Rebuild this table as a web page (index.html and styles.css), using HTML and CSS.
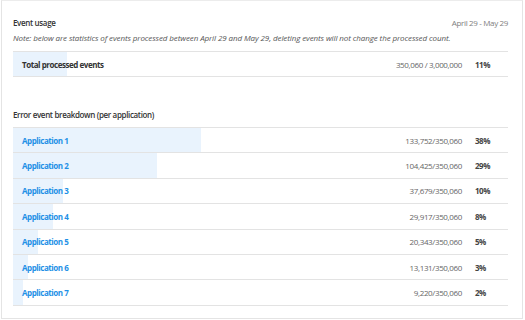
FILE: index.html
```html
<!DOCTYPE html>
<html>
<head>
<meta charset="utf-8">
<link rel="stylesheet" href="styles.css">
</head>
<body>
<div class="card">
  <div class="head">
    <div class="title">Event usage</div>
    <div class="range">April 29 - May 29</div>
  </div>
  <div class="note">Note: below are statistics of events processed between April 29 and May 29, deleting events will not change the processed count.</div>
  <div class="table total">
    <div class="row">
      <div class="bar" style="width:11%"></div>
      <div class="name strong">Total processed events</div>
      <div class="count">350,060 / 3,000,000</div>
      <div class="pct">11%</div>
    </div>
  </div>
  <div class="title section">Error event breakdown (per application)</div>
  <div class="table apps">
    <div class="row"><div class="bar" style="width:38%"></div><a class="name link">Application 1</a><div class="count">133,752/350,060</div><div class="pct">38%</div></div>
    <div class="row"><div class="bar" style="width:29%"></div><a class="name link">Application 2</a><div class="count">104,425/350,060</div><div class="pct">29%</div></div>
    <div class="row"><div class="bar" style="width:10%"></div><a class="name link">Application 3</a><div class="count">37,679/350,060</div><div class="pct">10%</div></div>
    <div class="row"><div class="bar" style="width:8%"></div><a class="name link">Application 4</a><div class="count">29,917/350,060</div><div class="pct">8%</div></div>
    <div class="row"><div class="bar" style="width:5%"></div><a class="name link">Application 5</a><div class="count">20,343/350,060</div><div class="pct">5%</div></div>
    <div class="row"><div class="bar" style="width:3%"></div><a class="name link">Application 6</a><div class="count">13,131/350,060</div><div class="pct">3%</div></div>
    <div class="row"><div class="bar" style="width:2%"></div><a class="name link">Application 7</a><div class="count">9,220/350,060</div><div class="pct">2%</div></div>
  </div>
</div>
</body>
</html>
```

FILE: styles.css
```css
* { box-sizing: border-box; }
body {
  margin: 0;
  background: #ffffff;
  font-family: "Open Sans", "Noto Sans", sans-serif;
  font-size: 8px;
  letter-spacing: -0.35px;
  color: #333333;
}
.card {
  margin: 0 2px 0 1px;
  height: 319px;
  border: 1px solid #e4e4e4;
  border-top-color: #ececec;
  padding: 16px 14px 0 11px;
}
.head {
  display: flex;
  justify-content: space-between;
  align-items: center;
  height: 11px;
}
.title {
  font-weight: 600;
  color: #333333;
  line-height: 11px;
}
.range {
  color: #808080;
  line-height: 11px;
}
.note {
  margin-top: 4px;
  font-style: italic;
  letter-spacing: -0.1px;
  color: #555555;
  line-height: 11px;
}
.table {
  border-top: 1px solid #e3e3e3;
}
.total {
  margin-top: 8px;
}
.total .row {
  height: 25px;
}
.section {
  margin-top: 32px;
}
.apps {
  margin-top: 7px;
}
.row {
  position: relative;
  display: flex;
  align-items: center;
  height: 25.4px;
  border-bottom: 1px solid #e3e3e3;
  padding: 0 13px 0 9px;
}
.bar {
  position: absolute;
  left: 0;
  top: 0;
  bottom: 0;
  background: #e9f3fd;
}
.name, .count, .pct {
  position: relative;
}
.name {
  flex: 1;
  font-weight: 700;
  letter-spacing: -0.45px;
}
.strong {
  color: #333333;
}
.link {
  color: #1e90e6;
  text-decoration: none;
}
.count {
  color: #666666;
  text-align: right;
}
.pct {
  width: 33px;
  padding-left: 13px;
  font-weight: 700;
  letter-spacing: -0.45px;
  color: #444444;
}
```
